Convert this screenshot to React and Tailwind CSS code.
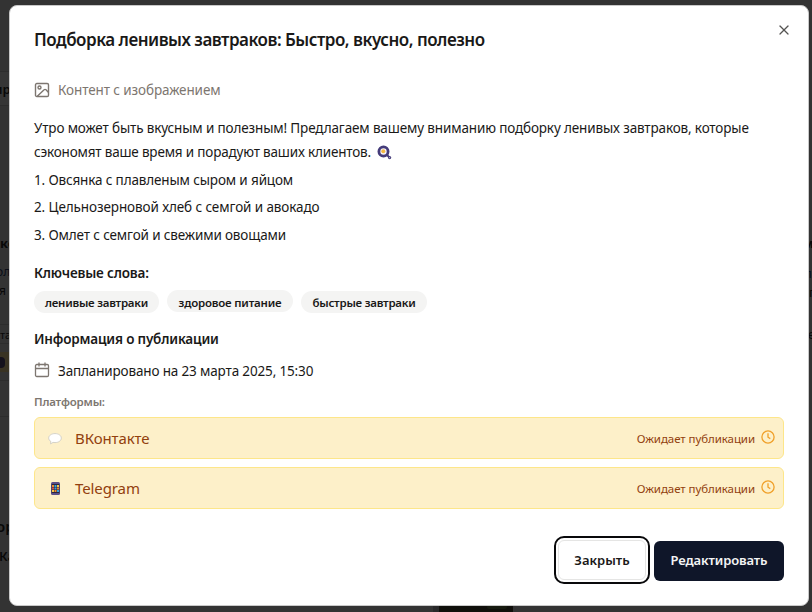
import { X } from "lucide-react";

const platforms = [
  { name: "ВКонтакте", icon: BubbleIcon },
  { name: "Telegram", icon: PhoneIcon },
];

function BubbleIcon() {
  return (
    <svg width="14" height="12" viewBox="0 0 14 12">
      <path d="M7 .6c3.600 0 6.300 1.900 6.300 4.500S10.600 9.600 7 9.600c-.7 0-1.400-.1-2-.2L2.500 10.900l.4-2.300C1.600 7.700.7 6.500.7 5.100.7 2.500 3.400.6 7 .6z" fill="#fff" stroke="#cfcdc4" strokeWidth=".9" />
    </svg>
  );
}

function PhoneIcon() {
  return (
    <svg width="9" height="13" viewBox="0 0 9 13">
      <rect width="9" height="13" rx="1.5" fill="#5b5088" />
      <rect x=".7" y="2" width="7.600" height="9" fill="#2a2540" />
      <path d="M1 3h2v2h-2zM6 5.500h2v2h-2zM3.500 8h2v2h-2z" fill="#f08a2e" />
      <path d="M3.500 3h2v2h-2zM3.500 5.500h2v2h-2zM6 8h2v2h-2z" fill="#35a5dd" />
      <path d="M6 3h2v2h-2zM1 8h2v2h-2z" fill="#f3c64a" />
      <path d="M1 5.500h2v2h-2z" fill="#d8533e" />
    </svg>
  );
}

function SearchIcon() {
  return (
    <svg width="15" height="15" viewBox="0 0 15 15">
      <path d="M9.500 9.500l3 3" stroke="#453c7a" strokeWidth="2" />
      <circle cx="12.600" cy="12.600" r="1.600" fill="#453c7a" />
      <circle cx="12.600" cy="12.600" r=".6" fill="#b9b5d6" />
      <circle cx="6.500" cy="6.500" r="4.600" fill="#f3effa" stroke="#453c7a" strokeWidth="2.800" />
      <circle cx="6.300" cy="6.300" r="2" fill="#f5b941" />
    </svg>
  );
}

function ImageIcon() {
  return (
    <svg width="16" height="16" viewBox="0 0 16 16" fill="none" stroke="#7d7670" strokeWidth="1.400">
      <rect x="1.500" y="1.500" width="13" height="13" rx="1.300" />
      <circle cx="5.500" cy="5.500" r="1.500" />
      <path d="M3.300 14.200l6.800-6.400c.6-.6 1.300-.6 1.900 0l2.300 2.400" />
    </svg>
  );
}

function CalendarIcon() {
  return (
    <svg width="16" height="17" viewBox="0 0 16 17" fill="none" stroke="#7d7670" strokeWidth="1.300">
      <rect x="1.500" y="2.500" width="13" height="12" rx="1.300" />
      <path d="M1.500 6.500h13M5 .5v4M11 .5v4" />
    </svg>
  );
}

function ClockIcon() {
  return (
    <svg width="14" height="14" viewBox="0 0 14 14" fill="none" stroke="#f0a029" strokeWidth="1.300">
      <circle cx="7" cy="7" r="6.100" />
      <path d="M7 3.200v4l2.300 1.400" />
    </svg>
  );
}

function Backdrop() {
  return (
    <div className="absolute inset-0 overflow-hidden whitespace-nowrap text-[14px] leading-5 text-[#080808]">
      <div className="absolute left-0 top-[71px] h-[35px] w-[9px] border-y border-[#2d2d2d] bg-[#363636]" />
      <div className="absolute left-[-6px] top-[79px] text-[13px] font-semibold">ир</div>
      <div className="absolute left-0 top-[233px] text-[13px] font-bold">ко</div>
      <div className="absolute left-[-4px] top-[262px] text-[12px] text-[#090d18]">ол</div>
      <div className="absolute left-[-1px] top-[281px] text-[12px]">я</div>
      <div className="absolute left-0 top-[324px] h-[20px] w-[9px] border-y border-[#2c2c2c]" />
      <div className="absolute left-0 top-[325px] text-[11px]">та</div>
      <div className="absolute left-0 top-[352px] h-[20px] w-[9px] bg-[#393323]" />
      <div className="absolute left-0 top-[357px] h-[11px] w-[5px] rounded-r-sm bg-[#14111c]" />
      <div className="absolute left-0 top-[380px] h-[37px] w-[9px] border-y border-[#2c2c2c]" />
      <div className="absolute left-[-4px] top-[516px] text-[15px] font-semibold">ор</div>
      <div className="absolute left-[-1px] top-[546px] text-[13px] font-semibold">Ка</div>
      <div className="absolute left-[803px] top-[233px] text-[13px] font-bold">м</div>
      <div className="absolute left-[804px] top-[263px] text-[13px] text-[#08111c]">п</div>
      <div className="absolute left-[809px] top-[282px] text-[13px]">п</div>
      <div className="absolute left-[808px] top-[325px] text-[12px]">е</div>
      <div className="absolute left-[433px] top-[600px] h-[12px] w-[6px] bg-[#29292a]" />
      <div className="absolute left-[439px] top-[600px] h-[12px] w-[74px] bg-[#100f0b]" />
      <div className="absolute left-[487px] top-[605px] h-[4px] w-[20px] rounded-full bg-[#171a10]" />
    </div>
  );
}

export default function App() {
  return (
    <div className="relative h-[612px] w-[812px] overflow-hidden bg-[#333333] font-['Noto_Sans',sans-serif] text-[#1a1918]">
      <Backdrop />
      <div className="relative ml-[9px] mt-[4.500px] flex h-[601px] w-[800px] flex-col rounded-lg border border-[#c9c9c9] bg-white px-6 whitespace-nowrap">
        <header className="flex h-[72px] items-start justify-between">
          <h2 className="mt-[22px] text-[17px] leading-6 font-semibold tracking-[-0.49px]">Подборка ленивых завтраков: Быстро, вкусно, полезно</h2>
          <X className="mt-[16px] -mr-2 size-4 text-[#555453]" strokeWidth={1.9} />
        </header>
        <div className="flex h-[25px] items-center gap-2 text-[13.500px] text-[#7d7670]">
          <ImageIcon />
          <span className="tracking-[-0.1px]">Контент с изображением</span>
        </div>
        <div className="mt-[13.500px] text-[13.500px] leading-6 tracking-[-0.14px]">
          <p>Утро может быть вкусным и полезным! Предлагаем вашему вниманию подборку ленивых завтраков, которые</p>
          <p className="flex items-center gap-[6px] tracking-[-0.18px]">сэкономят ваше время и порадуют ваших клиентов. <SearchIcon /></p>
        </div>
        <ol className="mt-[2.500px] text-[13.500px] leading-[27.500px] tracking-[-0.14px]">
          <li>1. Овсянка с плавленым сыром и яйцом</li>
          <li className="tracking-[-0.1px]">2. Цельнозерновой хлеб с семгой и авокадо</li>
          <li>3. Омлет с семгой и свежими овощами</li>
        </ol>
        <h3 className="mt-[14px] text-[13.500px] leading-5 font-semibold tracking-[-0.18px]">Ключевые слова:</h3>
        <div className="mt-[7px] flex h-[24px] gap-2 text-[11.500px] leading-[23px] font-semibold">
          <span className="mt-px h-[22px] w-[125px] rounded-full bg-[#f4f4f3] text-center tracking-[-0.25px]">ленивые завтраки</span>
          <span className="h-[22px] w-[126px] rounded-full bg-[#f4f4f3] pt-px text-center tracking-[-0.2px]">здоровое питание</span>
          <span className="mt-px h-[22px] w-[126px] rounded-full bg-[#f4f4f3] text-center tracking-[-0.25px]">быстрые завтраки</span>
        </div>
        <h3 className="mt-[15px] text-[13.500px] leading-5 font-semibold tracking-[-0.18px]">Информация о публикации</h3>
        <div className="mt-[10px] flex h-[24px] items-center gap-2 text-[13.500px]">
          <span className="-mt-[2px]"><CalendarIcon /></span>
          <span className="tracking-[-0.15px]">Запланировано на 23 марта 2025, 15:30</span>
        </div>
        <h4 className="mt-[11px] text-[11.500px] leading-4 font-semibold tracking-[-0.2px] text-[#7d7670]">Платформы:</h4>
        <div className="mt-[7px] flex flex-col gap-2">
          {platforms.map(({ name, icon: Icon }) => (
            <div key={name} className="flex h-[42px] items-center rounded-md border border-[#fde68a] bg-[#fdf0c9] pr-2 pl-3 text-[#92400e]">
              <span className="mt-px flex w-4 justify-center"><Icon /></span>
              <span className="ml-3 text-[15px] tracking-[-0.1px]">{name}</span>
              <span className="mt-px ml-auto text-[11.500px] tracking-[-0.07px]">Ожидает публикации</span>
              <span className="mb-[3px] ml-[6px]"><ClockIcon /></span>
            </div>
          ))}
        </div>
        <footer className="mt-[27px] flex items-start justify-end gap-1 text-[13px] font-semibold">
          <button className="h-[48px] w-[96px] rounded-[10px] border-2 border-[#09090b] bg-white p-[2px]">
            <span className="flex h-full items-center justify-center rounded-md border border-[#e5e5e4] pt-[2px]">Закрыть</span>
          </button>
          <button className="mt-[4.500px] h-[40px] w-[130px] rounded-md bg-[#0f1629] pt-px tracking-[-0.1px] text-[#f4f4f5]">Редактировать</button>
        </footer>
      </div>
    </div>
  );
}
